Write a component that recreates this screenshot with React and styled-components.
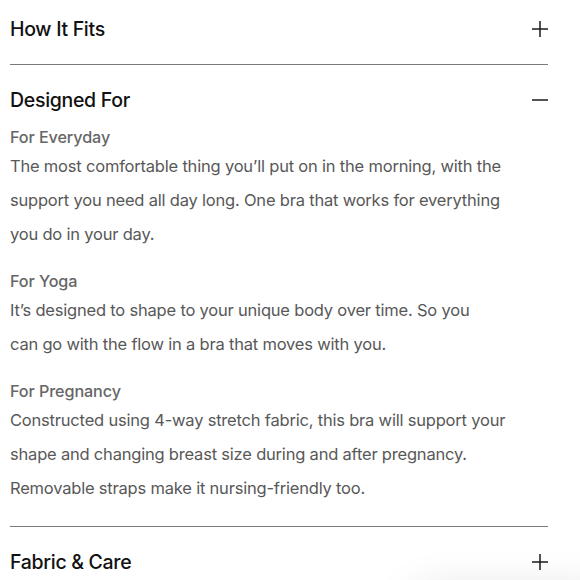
import React, { useState } from "react";
import styled, { createGlobalStyle } from "styled-components";

const GlobalStyle = createGlobalStyle`
  body {
    margin: 0;
    background: #fff;
    font-family: "Inter", "Liberation Sans", sans-serif;
    overflow: hidden;
  }
`;

const sections = [
  { title: "How It Fits", items: [] },
  {
    title: "Designed For",
    items: [
      {
        heading: "For Everyday",
        lines: [
          "The most comfortable thing you\u2019ll put on in the morning, with the",
          "support you need all day long. One bra that works for everything",
          "you do in your day.",
        ],
      },
      {
        heading: "For Yoga",
        lines: [
          "It\u2019s designed to shape to your unique body over time. So you",
          "can go with the flow in a bra that moves with you.",
        ],
      },
      {
        heading: "For Pregnancy",
        lines: [
          "Constructed using 4-way stretch fabric, this bra will support your",
          "shape and changing breast size during and after pregnancy.",
          "Removable straps make it nursing-friendly too.",
        ],
      },
    ],
  },
  { title: "Fabric & Care", items: [] },
];

const Accordion = () => {
  const [open, setOpen] = useState(1);

  return (
    <Wrapper>
      {sections.map((s, i) => (
        <Section key={s.title} $last={i === sections.length - 1}>
          <Header onClick={() => setOpen(open === i ? -1 : i)}>
            <Title>{s.title}</Title>
            <Toggle open={open === i} />
          </Header>
          {open === i && (
            <Panel>
              {s.items.map((item) => (
                <Item key={item.heading}>
                  <SubHeading>{item.heading}</SubHeading>
                  <Body>
                    {item.lines.map((l) => (
                      <Line key={l}>{l}</Line>
                    ))}
                  </Body>
                </Item>
              ))}
            </Panel>
          )}
        </Section>
      ))}
    </Wrapper>
  );
};

const Toggle = ({ open }) => (
  <svg width="16" height="16" viewBox="0 0 16 16">
    <path d="M0 8h16" stroke="#1a1a1a" strokeWidth="1.5" />
    {!open && <path d="M8 0v16" stroke="#1a1a1a" strokeWidth="1.5" />}
  </svg>
);

const App = () => (
  <>
    <GlobalStyle />
    <Accordion />
    {/* floating widget sitting just below the fold, only its shadow shows */}
    <FloatingShadow />
  </>
);

const Wrapper = styled.div`
  width: 538px;
  padding: 0 32px 0 10px;
`;

const Section = styled.section`
  padding-bottom: 6px;
  border-bottom: ${(p) => (p.$last ? "none" : "1.5px solid #7a7a7a")};

  & + & {
    padding-top: 6px;
  }
`;

const Header = styled.div`
  display: flex;
  align-items: center;
  justify-content: space-between;
  height: 58px;
  cursor: pointer;
`;

const Title = styled.h2`
  margin: 0;
  font-size: 19.5px;
  font-weight: 550;
  color: #111;
  letter-spacing: -0.3px;
`;

const Panel = styled.div`
  display: flex;
  flex-direction: column;
  gap: 18px;
  padding: 0 0 15px;
  margin-top: -4px;
`;

const Item = styled.div`
  display: flex;
  flex-direction: column;
`;

const SubHeading = styled.h3`
  margin: 0;
  font-size: 16.2px;
  font-weight: 500;
  line-height: 24px;
  color: #666;
  letter-spacing: -0.1px;
`;

const Body = styled.p`
  margin: 0;
  font-size: 16.5px;
  line-height: 34px;
  color: #585858;
  letter-spacing: -0.2px;
`;

const Line = styled.span`
  display: block;
  white-space: nowrap;
`;

const FloatingShadow = styled.div`
  position: fixed;
  left: 410px;
  top: 592px;
  width: 200px;
  height: 60px;
  border-radius: 30px;
  background: #fff;
  box-shadow: 0 0 40px 6px rgba(0, 0, 0, 0.1);
`;

export default App;
